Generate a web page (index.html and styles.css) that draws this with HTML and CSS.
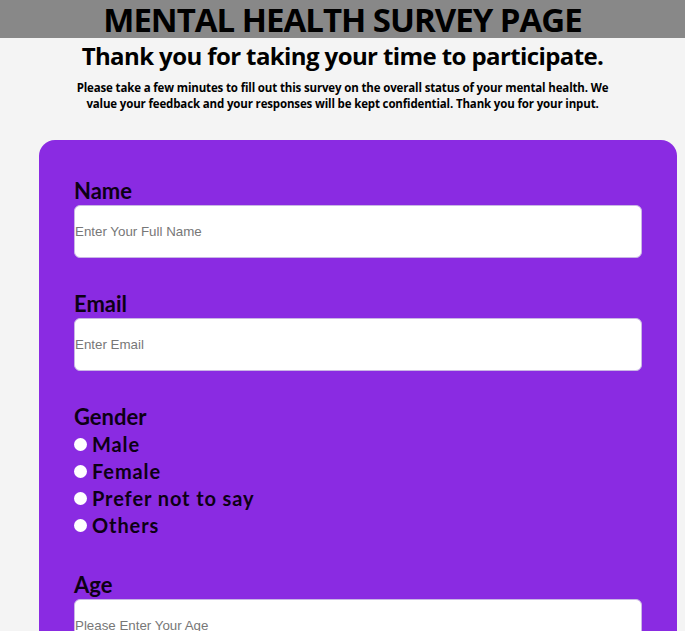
FILE: index.html
```html
<!DOCTYPE html>
<html lang="en">
<head>
<meta charset="utf-8">
<title>Mental Health Survey</title>
<link rel="stylesheet" href="styles.css">
</head>
<body>
<header class="top-bar">
  <h1 class="title">MENTAL HEALTH SURVEY PAGE</h1>
</header>
<h2 class="subtitle">Thank you for taking your time to participate.</h2>
<p class="intro">Please take a few minutes to fill out this survey on the overall status of your mental health. We value your feedback and your responses will be kept confidential. Thank you for your input.</p>
<form class="survey">
  <div class="field">
    <label class="label" for="name">Name</label>
    <input class="text-input" id="name" type="text" placeholder="Enter Your Full Name">
  </div>
  <div class="field">
    <label class="label" for="email">Email</label>
    <input class="text-input" id="email" type="email" placeholder="Enter Email">
  </div>
  <div class="field">
    <div class="label">Gender</div>
    <label class="option"><input class="radio" type="radio" name="gender">Male</label>
    <label class="option"><input class="radio" type="radio" name="gender">Female</label>
    <label class="option"><input class="radio" type="radio" name="gender">Prefer not to say</label>
    <label class="option"><input class="radio" type="radio" name="gender">Others</label>
  </div>
  <div class="field">
    <label class="label" for="age">Age</label>
    <input class="text-input" id="age" type="number" placeholder="Please Enter Your Age">
  </div>
</form>
</body>
</html>
```
FILE: styles.css
```css
html, body {
  margin: 0;
  padding: 0;
}
body {
  background: #f4f4f4;
  font-family: "Open Sans", "Noto Sans", sans-serif;
  color: #000;
  overflow: hidden;
}
.top-bar {
  background: #888888;
  height: 38px;
  display: flex;
  justify-content: center;
  align-items: center;
}
.title {
  margin: 0;
  font-size: 33px;
  font-weight: 700;
  line-height: 38px;
  letter-spacing: -1px;
  padding-top: 1px;
}
.subtitle {
  margin: 2px 0 0;
  text-align: center;
  font-size: 24px;
  font-weight: 700;
  line-height: 32px;
  letter-spacing: -0.6px;
}
.intro {
  margin: 8px auto 0;
  width: 545px;
  text-align: center;
  font-size: 11.5px;
  font-weight: 700;
  line-height: 16px;
  letter-spacing: -0.15px;
}
.survey {
  margin: 28px 8px 0 39px;
  background: #8a2be2;
  border-radius: 16px;
  padding: 36px 35px 40px;
  height: 600px;
}
.field {
  display: flex;
  flex-direction: column;
  margin-bottom: 31px;
}
.label {
  font-family: "Comic Sans MS", "Lato", sans-serif;
  font-weight: 700;
  font-size: 22px;
  line-height: 29px;
  color: #0d0014;
}
.text-input {
  box-sizing: border-box;
  height: 53px;
  width: 100%;
  margin: 0;
  padding: 0;
  border: 1px solid #c9b6e4;
  border-radius: 6px;
  background: #fff;
  font-family: "Liberation Sans", Arial, sans-serif;
  font-size: 13.33px;
}
.text-input::placeholder {
  color: #777;
}
.option {
  display: flex;
  align-items: center;
  font-family: "Comic Sans MS", "Lato", sans-serif;
  font-weight: 700;
  font-size: 20px;
  line-height: 27px;
  color: #0d0014;
  letter-spacing: 0.9px;
}
.radio {
  appearance: none;
  -webkit-appearance: none;
  width: 13px;
  height: 13px;
  margin: 0 5px 0 0;
  border-radius: 50%;
  background: #fff;
  border: none;
}
```
